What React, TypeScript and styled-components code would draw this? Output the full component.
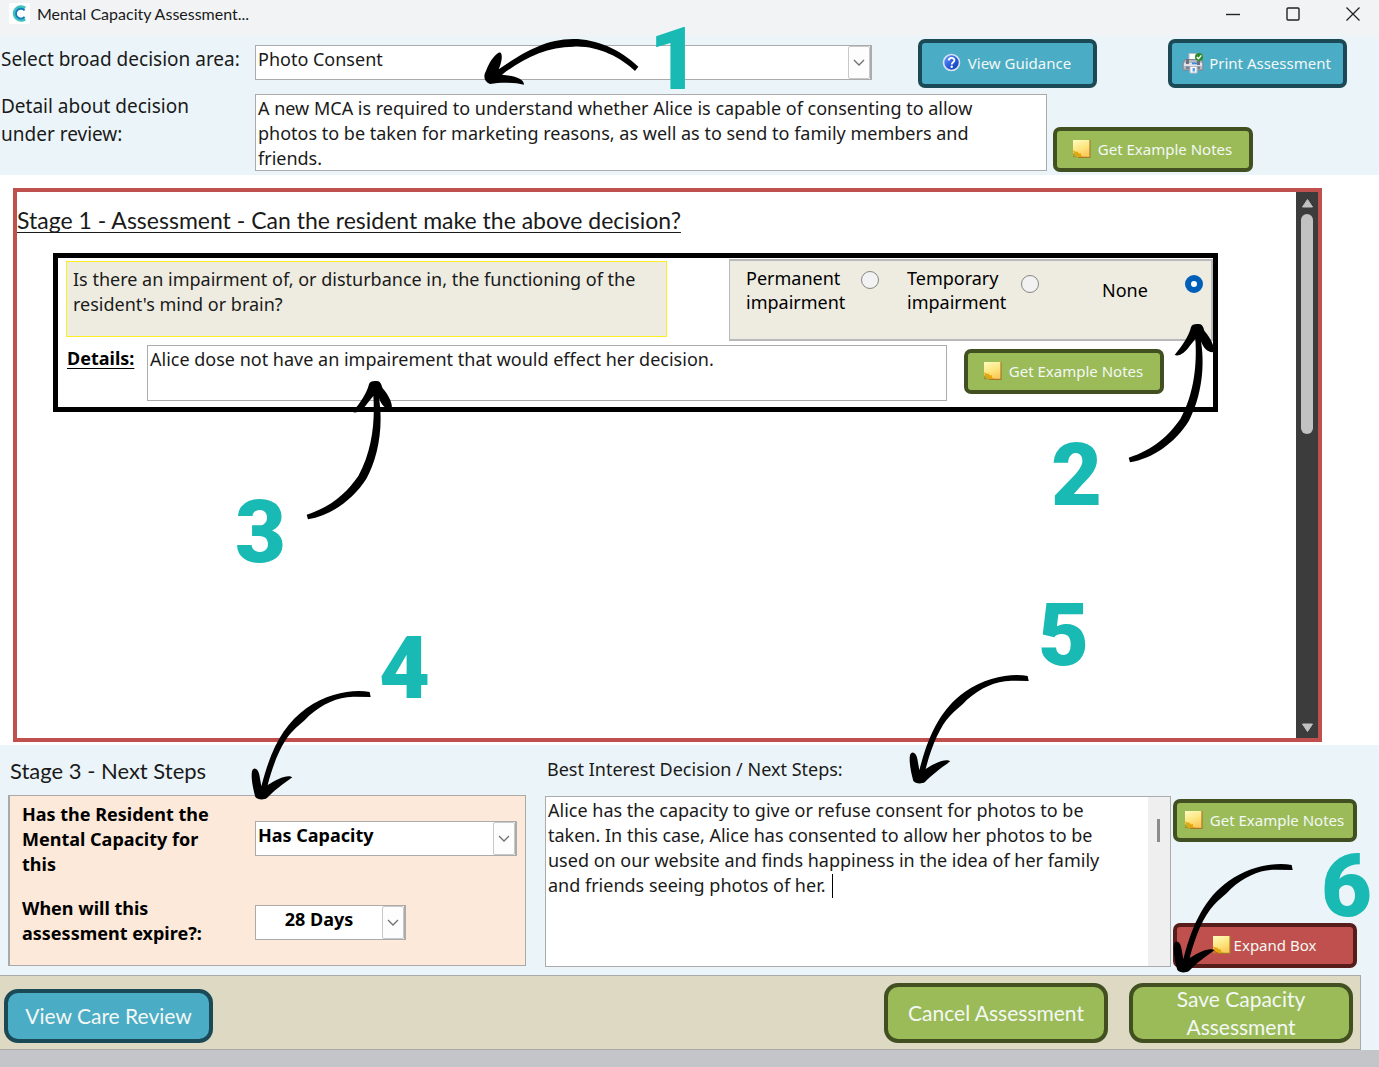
import React from "react";
import styled, { createGlobalStyle, css } from "styled-components";

const GlobalStyle = createGlobalStyle`
  *, *::before, *::after { box-sizing: border-box; }
  body { margin: 0; background: #c4c5c9; }
  button, select, textarea, input { font: inherit; color: inherit; margin: 0; }
`;

const displayFont = `Lato, "Open Sans", sans-serif`;

const Page = styled.div`
  position: relative;
  display: flex;
  flex-direction: column;
  min-height: 100vh;
  overflow: hidden;
  background: #c4c5c9;
  color: #1a1a1a;
  font-family: "Noto Sans", "Open Sans", sans-serif;
  font-size: 18px;
  line-height: 25px;
`;

const TitleBar = styled.header`
  display: flex;
  align-items: center;
  height: 36px;
  padding: 0 11px 9px 9px;
  background: #f1f3f5;
`;

const AppTitle = styled.h1`
  flex: 1;
  margin: 0 0 0 7px;
  font-family: ${displayFont};
  font-size: 16px;
  line-height: 24px;
  font-weight: 400;
`;

const WindowButtons = styled.div`
  display: flex;
  gap: 30px;
`;

const WindowButton = styled.button`
  display: grid;
  place-items: center;
  width: 30px;
  height: 24px;
  padding: 0;
  border: 0;
  background: none;
`;

const Decision = styled.section`
  display: flex;
  flex-direction: column;
  background: #ebf5f9;
  padding: 3px 32px 3px 1px;
`;

const DecisionRow = styled.div`
  display: flex;
  align-items: flex-start;
`;

const FieldLabel = styled.label<{ $top: number }>`
  flex: none;
  width: 254px;
  padding-top: ${(p) => p.$top}px;
  font-size: 19px;
  line-height: 28px;
`;

const SelectBox = styled.div<{ $bold?: boolean; $center?: boolean }>`
  position: relative;
  height: 35px;
  border: 1px solid #ababab;
  border-right-width: 2px;
  background: #fff;
  font-weight: ${(p) => (p.$bold ? 700 : 400)};

  select {
    appearance: none;
    width: 100%;
    height: 100%;
    padding: 0 ${(p) => (p.$center ? 24 : 26)}px 6px 2px;
    border: 0;
    outline: 0;
    background: transparent;
    text-align: ${(p) => (p.$center ? "center" : "left")};
    text-align-last: ${(p) => (p.$center ? "center" : "left")};
  }
`;

const SelectArrow = styled.span`
  position: absolute;
  top: 0;
  right: 0;
  bottom: 0;
  display: grid;
  place-items: center;
  width: 22px;
  border: 1px solid #c8c8c8;
  border-radius: 2px;
  background: #fdfdfd;
  pointer-events: none;
`;

const AreaSelect = styled(SelectBox)`
  flex: 1;
  margin: 6px 46px 0 0;
`;

const HeaderButtons = styled.div`
  display: flex;
  gap: 71px;
`;

const tones = {
  blue: { fill: "#4bacc6", edge: "#1b4a56" },
  green: { fill: "#9bbb59", edge: "#414f21" },
  red: { fill: "#c0504d", edge: "#561d1b" },
};

const ActionButton = styled.button<{
  $tone: keyof typeof tones;
  $width: number;
  $height: number;
  $large?: boolean;
  $gap?: number;
}>`
  display: flex;
  flex: none;
  align-items: center;
  justify-content: center;
  gap: ${(p) => p.$gap ?? 7}px;
  width: ${(p) => p.$width}px;
  height: ${(p) => p.$height}px;
  padding: 0 2px 2px 0;
  border: 4px solid ${(p) => tones[p.$tone].edge};
  border-radius: 7px;
  background: ${(p) => tones[p.$tone].fill};
  color: #f3f8f4;
  font-size: 15px;
  line-height: 20px;
  white-space: nowrap;
  ${(p) =>
    p.$large &&
    css`
      padding: 0;
      border-radius: 14px;
      font-family: ${displayFont};
      font-size: 21px;
      line-height: 28px;
      white-space: normal;
    `}
`;

const TextBox = styled.textarea<{ $height: number }>`
  display: block;
  flex: 1;
  min-width: 0;
  width: 100%;
  height: ${(p) => p.$height}px;
  padding: 1px 30px 1px 2px;
  border: 1px solid #ababab;
  border-radius: 0;
  outline: 0;
  background: #fff;
  resize: none;
  overflow: hidden;
`;

const DetailRow = styled(DecisionRow)`
  padding: 4px 94px 0 0;
`;

const DetailBox = styled(TextBox)`
  margin-top: 2px;
`;

const DetailButtonSlot = styled.div`
  padding: 35px 0 0 6px;
`;

const StageArea = styled.main`
  padding: 13px 57px 3px 13px;
  background: #fff;
`;

const StagePanel = styled.section`
  display: flex;
  height: 554px;
  border: 4px solid #c0504d;
`;

const StageContent = styled.div`
  flex: 1;
  padding: 12px 78px 0 0;
`;

const StageTitle = styled.h2`
  margin: 0;
  font-family: ${displayFont};
  font-size: 23px;
  line-height: 32px;
  font-weight: 400;
  text-decoration: underline;
  text-decoration-thickness: 1px;
  text-decoration-skip-ink: none;
  text-underline-offset: 3px;
`;

const Question = styled.div`
  margin: 17px 0 0 36px;
  height: 159px;
  padding: 1px 0 0 8px;
  border: 5px solid #000;
`;

const QuestionRow = styled.div`
  display: flex;
  justify-content: space-between;
`;

const QuestionText = styled.p`
  flex: 0 1 601px;
  height: 76px;
  margin: 2px 0 0;
  padding: 5px 6px;
  border: 1px solid #fdee21;
  background: #eeece1;
`;

const RadioPanel = styled.fieldset`
  display: flex;
  align-items: flex-start;
  flex: none;
  width: 484px;
  height: 82px;
  margin: 0;
  padding: 5px 7px 0 16px;
  border: 2px solid #b9b9b9;
  border-left-width: 1px;
  background: #eeece1;
`;

const RadioLabel = styled.label<{ $width: number; $top: number }>`
  width: ${(p) => p.$width}px;
  padding-top: ${(p) => p.$top}px;
  line-height: 24px;
  color: #000;
`;

const Radio = styled.input<{ $top: number; $right: number }>`
  appearance: none;
  flex: none;
  width: 18px;
  height: 18px;
  margin: ${(p) => p.$top}px ${(p) => p.$right}px 0 0;
  border: 1px solid #868686;
  border-radius: 50%;
  background: #f2f2f2;

  &:checked {
    border: 6px solid #005fb8;
    background: #fff;
  }
`;

const DetailsRow = styled.div`
  display: flex;
  align-items: flex-start;
  padding: 4px 49px 0 1px;
`;

const DetailsLabel = styled.label`
  flex: none;
  width: 80px;
  padding-top: 1px;
  color: #000;
  font-weight: 700;
  text-decoration: underline;
  text-underline-offset: 3px;
`;

const DetailsButtonSlot = styled.div`
  padding: 4px 0 0 17px;
`;

const ScrollTrack = styled.div`
  display: flex;
  flex-direction: column;
  align-items: center;
  width: 22px;
  padding: 6px 0 5px;
  background: #3c3c3c;
`;

const ScrollThumb = styled.div`
  width: 12px;
  height: 220px;
  margin: 6px 0 auto;
  border-radius: 6px;
  background: #c2c2c2;
`;

const NextSteps = styled.section`
  display: grid;
  grid-template-columns: minmax(0, 535fr) minmax(0, 626fr) 184px;
  column-gap: 2px;
  padding: 10px 22px 7px 8px;
  background: #ebf5f9;
`;

const CapacityColumn = styled.div`
  padding-right: 17px;
`;

const NextTitle = styled.h2`
  margin: 0;
  padding-left: 2px;
  height: 40px;
  font-family: ${displayFont};
  font-size: 22px;
  line-height: 32px;
  font-weight: 400;
`;

const OutcomeTitle = styled.label`
  display: block;
  height: 41px;
  padding: 2px 0 0 2px;
`;

const CapacityCard = styled.div`
  display: grid;
  grid-template-columns: 233px 1fr;
  grid-template-rows: 94px auto;
  height: 171px;
  padding: 6px 8px 0 12px;
  border: 1px solid #a9a9a9;
  border-left-width: 2px;
  background: #fde9d9;
  color: #000;
`;

const CapacityLabel = styled.label`
  width: 200px;
  font-weight: 700;
`;

const CapacitySelect = styled(SelectBox)<{ $top: number; $width: string }>`
  width: ${(p) => p.$width};
  margin-top: ${(p) => p.$top}px;
`;

const OutcomeBox = styled.div`
  position: relative;
  display: flex;
  height: 171px;
  border: 1px solid #ababab;
  background: #fff;
`;

const OutcomeText = styled(TextBox)`
  height: 100%;
  border: 0;
`;

const Caret = styled.span`
  position: absolute;
  left: 286px;
  top: 77px;
  width: 1px;
  height: 24px;
  background: #000;
`;

const OutcomeScroll = styled.div`
  width: 22px;
  padding: 22px 0 0 9px;
  background: #efefef;
`;

const OutcomeThumb = styled.div`
  width: 3px;
  height: 23px;
  background: #8b8b8b;
`;

const OutcomeActions = styled.div`
  display: flex;
  flex-direction: column;
  justify-content: space-between;
  height: 213px;
  padding: 44px 0 0;
  align-items: flex-start;
`;

const FooterWrap = styled.div`
  padding-right: 18px;
  background: #ebf5f9;
`;

const Footer = styled.footer`
  display: flex;
  align-items: flex-start;
  gap: 21px;
  height: 75px;
  padding: 7px 7px 0 4px;
  border: solid #a9a9a9;
  border-width: 1px 1px 1px 0;
  background: #ddd9c3;
`;

const ReviewSlot = styled.div`
  flex: 1;
  padding-top: 6px;
`;

const Callout = styled.span<{ $x: number; $y: number }>`
  position: absolute;
  left: ${(p) => p.$x}px;
  top: ${(p) => p.$y}px;
  color: #1abab4;
  font-family: Roboto, sans-serif;
  font-size: 88px;
  line-height: 64px;
  font-weight: 900;
  pointer-events: none;
`;

const Arrow = styled.svg<{ $x: number; $y: number }>`
  position: absolute;
  left: ${(p) => p.$x}px;
  top: ${(p) => p.$y}px;
  pointer-events: none;
`;

const AppLogo = () => (
  <svg width="21" height="21" viewBox="0 0 21 21" aria-hidden="true">
    <rect width="21" height="21" fill="#fff" />
    <path d="M16 5.2A6.6 6.6 0 1 0 16 15.8" fill="none" stroke="#3fc1c0" strokeWidth="3.4" />
    <path d="M15.6 7.4A4.9 4.9 0 1 0 15.6 13.9" fill="none" stroke="#1779ba" strokeWidth="1.8" />
  </svg>
);

const Chevron = () => (
  <svg width="12" height="7" viewBox="0 0 12 7" aria-hidden="true">
    <path d="M1 1l5 5 5-5" fill="none" stroke="#707070" strokeWidth="1.3" />
  </svg>
);

const NoteIcon = () => (
  <svg width="19" height="19" viewBox="0 0 19 19" aria-hidden="true">
    <defs>
      <linearGradient id="noteFill" x1="0" y1="0" x2="0.4" y2="1">
        <stop offset="0" stopColor="#fffbc0" />
        <stop offset="0.6" stopColor="#fde57e" />
        <stop offset="1" stopColor="#fbcb5c" />
      </linearGradient>
    </defs>
    <path d="M1 1h17v17H9L1 14z" fill="url(#noteFill)" />
    <path d="M18 1v17.3H6" fill="none" stroke="#a8782c" strokeWidth="1.2" />
    <path d="M1 11c1 4 2 6 6 7h5c-3-1-3.500-2-3-4-2 1-3 0-3.500-1.500-1.500.500-3 0-4.500-1.500z" fill="#e3a70e" />
    <path d="M1 14c1 3 3 4 6 4.300H1z" fill="#b98a1d" />
  </svg>
);

const HelpIcon = () => (
  <svg width="19" height="19" viewBox="0 0 19 19" aria-hidden="true">
    <defs>
      <linearGradient id="helpFill" x1="0" y1="0" x2="1" y2="1">
        <stop offset="0" stopColor="#7fa6f5" />
        <stop offset="0.5" stopColor="#2a5fdf" />
        <stop offset="1" stopColor="#1238a8" />
      </linearGradient>
    </defs>
    <circle cx="9.500" cy="9.500" r="8" fill="url(#helpFill)" stroke="#d9e3f5" strokeWidth="1.600" />
    <path d="M6.800 7.500c0-3.400 5.600-3.400 5.600-.3 0 2-2.600 2-2.600 4.200" fill="none" stroke="#fff" strokeWidth="1.900" />
    <circle cx="9.700" cy="13.700" r="1.200" fill="#fff" />
  </svg>
);

const PrinterIcon = () => (
  <svg width="22" height="22" viewBox="0 0 22 22" aria-hidden="true">
    <path d="M7 8V1.500h8V8z" fill="#fdfdfd" stroke="#b5bcc8" />
    <path d="M3 7.500h16l2 3.500v7H1v-7z" fill="#b4b8c2" stroke="#7d8390" />
    <path d="M2 11h18v3H2z" fill="#dfe3ec" />
    <path d="M4 7h3v5H4zM15 9h3v4h-3z" fill="#6d7280" />
    <path d="M10 10.500h5v1.800h-5z" fill="#3d8be0" />
    <path d="M4 14.500h14v2.500H4z" fill="#7b808c" />
    <path d="M8 14.500h7v6.500H8z" fill="#fff" stroke="#b5bcc8" />
    <path d="M10.500 16h2.500v3.500h-2.500z" fill="#5aa3ec" />
    <circle cx="17" cy="5" r="4" fill="#2f8a2b" />
    <path d="M14.800 5l1.700 1.700 2.900-3.300" fill="none" stroke="#fff" strokeWidth="1.400" />
  </svg>
);

const Triangle = ({ down }: { down?: boolean }) => (
  <svg width="13" height="10" viewBox="0 0 13 10" aria-hidden="true">
    <path
      d={down ? "M1.500 1h10L6.500 8.500z" : "M1.500 9h10L6.500 1.500z"}
      fill="#c2c2c2"
      stroke="#c2c2c2"
      strokeLinejoin="round"
    />
  </svg>
);

const SweepDown = ({ x, y }: { x: number; y: number }) => (
  <Arrow $x={x} $y={y} width="124" height="114" viewBox="750 205 372 342" aria-hidden="true">
    <path d="M1112 232L1109 217C1060 208 985 220 920 265C850 315 812 390 784 500L778 465C774 445 760 440 756 455C752 475 760 510 766 532C772 540 790 542 801 535C820 515 850 492 877 473C865 462 830 478 803 496C820 430 845 370 875 338C890 320 912 305 927 288C970 252 1010 232 1060 231Z" />
  </Arrow>
);

const SweepUp = ({ x, y }: { x: number; y: number }) => (
  <Arrow $x={x} $y={y} width="94" height="144" viewBox="249 114 282 432" aria-hidden="true">
    <path d="M260 524L264 538C330 528 400 480 440 415C470 360 492 270 477 175C485 198 500 210 515 207C519 190 505 165 488 145C484 136 484 124 470 123C458 122 449 124 447 133C440 160 420 190 398 216C412 222 430 208 443 189L460 168C465 240 458 330 415 408C380 458 335 500 260 524Z" />
  </Arrow>
);

export default function App() {
  return (
    <Page>
      <GlobalStyle />
      <TitleBar>
        <AppLogo />
        <AppTitle>Mental Capacity Assessment...</AppTitle>
        <WindowButtons>
          <WindowButton aria-label="Minimise">
            <svg width="14" height="14" viewBox="0 0 14 14">
              <path d="M0 7.500h14" stroke="#222" strokeWidth="1.400" />
            </svg>
          </WindowButton>
          <WindowButton aria-label="Maximise">
            <svg width="14" height="14" viewBox="0 0 14 14">
              <rect x="1" y="1" width="12" height="12" rx="1" fill="none" stroke="#222" strokeWidth="1.400" />
            </svg>
          </WindowButton>
          <WindowButton aria-label="Close">
            <svg width="14" height="14" viewBox="0 0 14 14">
              <path d="M.5.500l13 13M13.500.500l-13 13" stroke="#222" strokeWidth="1.300" />
            </svg>
          </WindowButton>
        </WindowButtons>
      </TitleBar>

      <Decision>
        <DecisionRow>
          <FieldLabel $top={6} htmlFor="area">Select broad decision area:</FieldLabel>
          <AreaSelect>
            <select id="area" defaultValue="Photo Consent">
              <option>Photo Consent</option>
            </select>
            <SelectArrow><Chevron /></SelectArrow>
          </AreaSelect>
          <HeaderButtons>
            <ActionButton $tone="blue" $width={179} $height={49}><HelpIcon />View Guidance</ActionButton>
            <ActionButton $tone="blue" $width={179} $height={49} $gap={5}><PrinterIcon />Print Assessment</ActionButton>
          </HeaderButtons>
        </DecisionRow>
        <DetailRow>
          <FieldLabel $top={0} htmlFor="detail">Detail about decision<br />under review:</FieldLabel>
          <DetailBox
            id="detail"
            $height={77}
            defaultValue="A new MCA is required to understand whether Alice is capable of consenting to allow photos to be taken for marketing reasons, as well as to send to family members and friends."
          />
          <DetailButtonSlot>
            <ActionButton $tone="green" $width={200} $height={45}><NoteIcon />Get Example Notes</ActionButton>
          </DetailButtonSlot>
        </DetailRow>
      </Decision>

      <StageArea>
        <StagePanel>
          <StageContent>
            <StageTitle>Stage 1 - Assessment - Can the resident make the above decision?</StageTitle>
            <Question>
              <QuestionRow>
                <QuestionText>
                  Is there an impairment of, or disturbance in, the functioning of the resident's mind or brain?
                </QuestionText>
                <RadioPanel aria-label="Impairment">
                  <RadioLabel $width={115} $top={0} htmlFor="permanent">Permanent impairment</RadioLabel>
                  <Radio $top={5} $right={28} type="radio" name="impairment" id="permanent" />
                  <RadioLabel $width={114} $top={0} htmlFor="temporary">Temporary impairment</RadioLabel>
                  <Radio $top={9} $right={63} type="radio" name="impairment" id="temporary" />
                  <RadioLabel $width={83} $top={12} htmlFor="none">None</RadioLabel>
                  <Radio $top={9} $right={0} type="radio" name="impairment" id="none" defaultChecked />
                </RadioPanel>
              </QuestionRow>
              <DetailsRow>
                <DetailsLabel htmlFor="details">Details:</DetailsLabel>
                <TextBox
                  id="details"
                  $height={56}
                  defaultValue="Alice dose not have an impairement that would effect her decision."
                />
                <DetailsButtonSlot>
                  <ActionButton $tone="green" $width={200} $height={45}><NoteIcon />Get Example Notes</ActionButton>
                </DetailsButtonSlot>
              </DetailsRow>
            </Question>
          </StageContent>
          <ScrollTrack>
            <Triangle />
            <ScrollThumb />
            <Triangle down />
          </ScrollTrack>
        </StagePanel>
      </StageArea>

      <NextSteps>
        <CapacityColumn>
          <NextTitle>Stage 3 - Next Steps</NextTitle>
          <CapacityCard>
            <CapacityLabel htmlFor="capacity">Has the Resident the Mental Capacity for this</CapacityLabel>
            <CapacitySelect $bold $top={19} $width="100%">
              <select id="capacity" defaultValue="Has Capacity">
                <option>Has Capacity</option>
              </select>
              <SelectArrow><Chevron /></SelectArrow>
            </CapacitySelect>
            <CapacityLabel htmlFor="expiry">When will this assessment expire?:</CapacityLabel>
            <CapacitySelect $bold $center $top={9} $width="151px">
              <select id="expiry" defaultValue="28 Days">
                <option>28 Days</option>
              </select>
              <SelectArrow><Chevron /></SelectArrow>
            </CapacitySelect>
          </CapacityCard>
        </CapacityColumn>
        <div>
          <OutcomeTitle htmlFor="outcome">Best Interest Decision / Next Steps:</OutcomeTitle>
          <OutcomeBox>
            <OutcomeText
              id="outcome"
              $height={169}
              defaultValue="Alice has the capacity to give or refuse consent for photos to be taken. In this case, Alice has consented to allow her photos to be used on our website and finds happiness in the idea of her family and friends seeing photos of her."
            />
            <Caret />
            <OutcomeScroll><OutcomeThumb /></OutcomeScroll>
          </OutcomeBox>
        </div>
        <OutcomeActions>
          <ActionButton $tone="green" $width={184} $height={43}><NoteIcon />Get Example Notes</ActionButton>
          <ActionButton $tone="red" $width={184} $height={45} $gap={3}><NoteIcon />Expand Box</ActionButton>
        </OutcomeActions>
      </NextSteps>

      <FooterWrap>
        <Footer>
          <ReviewSlot>
            <ActionButton $tone="blue" $width={209} $height={54} $large>View Care Review</ActionButton>
          </ReviewSlot>
          <ActionButton $tone="green" $width={224} $height={60} $large>Cancel Assessment</ActionButton>
          <ActionButton $tone="green" $width={224} $height={60} $large>Save Capacity Assessment</ActionButton>
        </Footer>
      </FooterWrap>

      <Arrow $x={482} $y={37} width="160" height="50" viewBox="126 111 480 150" aria-hidden="true">
        <path d="M585 213L595 200C540 148 470 117 400 117C310 117 240 165 176 208C186 185 188 165 182 158C172 154 150 180 138 213C128 230 134 246 150 252C185 246 225 248 252 254C252 235 225 228 186 224C250 175 320 140 400 140C470 136 540 170 585 213Z" />
      </Arrow>
      <Callout $x={649} $y={27}>1</Callout>
      <SweepUp x={1125} y={321} />
      <Callout $x={1051} $y={443}>2</Callout>
      <SweepUp x={303} y={378} />
      <Callout $x={235} $y={500}>3</Callout>
      <SweepDown x={250} y={688} />
      <Callout $x={379} $y={636}>4</Callout>
      <SweepDown x={908} y={672} />
      <Callout $x={1038} $y={603}>5</Callout>
      <SweepDown x={1172} y={861} />
      <Callout $x={1321} $y={854}>6</Callout>
    </Page>
  );
}
